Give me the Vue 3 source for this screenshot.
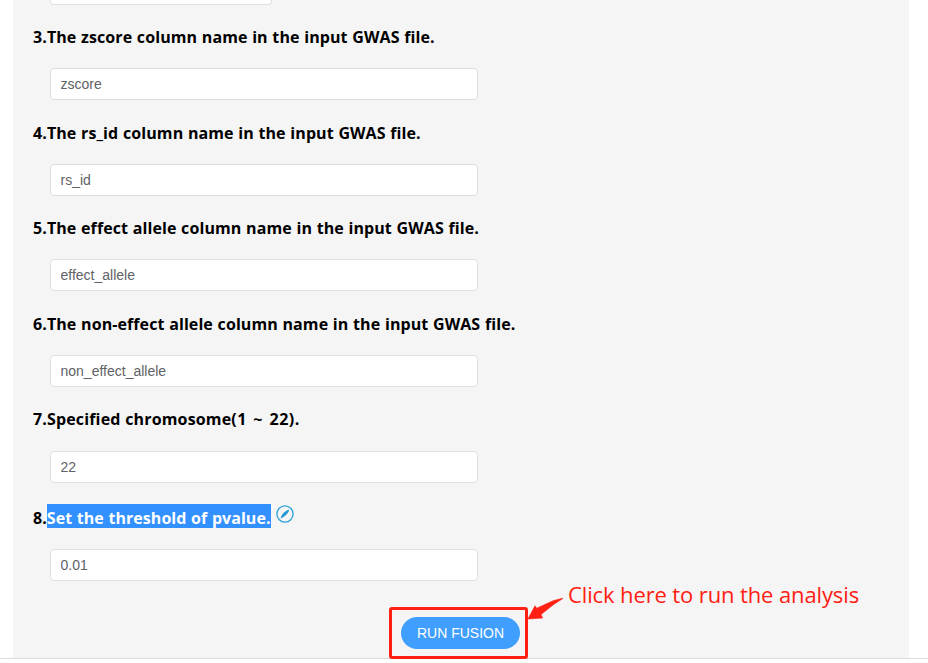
<script setup>
import { ref } from 'vue'

const fields = ref([
  { n: 3, label: 'The zscore column name in the input GWAS file.', value: 'zscore', size: 'short' },
  { n: 4, label: 'The rs_id column name in the input GWAS file.', value: 'rs_id' },
  { n: 5, label: 'The effect allele column name in the input GWAS file.', value: 'effect_allele', size: 'short' },
  { n: 6, label: 'The non-effect allele column name in the input GWAS file.', value: 'non_effect_allele' },
  { n: 7, label: 'Specified chromosome', range: '(1 ~ 22).', value: '22', size: 'even' },
  { n: 8, label: 'Set the threshold of pvalue.', value: '0.01', size: 'tall', selected: true },
])
</script>

<template>
  <div class="page">
    <main class="panel">
      <div class="previous"></div>
      <section v-for="f in fields" :key="f.n" class="field">
        <h4 class="title" :class="f.size">
          <span>{{ f.n }}.</span><span :class="{ selected: f.selected }">{{ f.label }}</span><span v-if="f.range" class="range">{{ f.range }}</span>
          <svg v-if="f.selected" class="compass" width="18" height="18" viewBox="0 0 18 18">
            <circle cx="9" cy="9" r="8.1" fill="none" stroke="#2a9fd8" stroke-width="1.3" />
            <path d="M13.200 4.400C11 5 9 6.400 7.500 7.900C6.100 9.300 5 11.200 4.500 13.400C6.700 12.700 8.500 11.500 9.900 10.100C11.500 8.500 12.700 6.700 13.200 4.400Z" fill="#2196d3" />
          </svg>
        </h4>
        <input v-model="f.value" class="input" type="text" />
      </section>
      <div class="actions">
        <div class="highlight"><button class="run">RUN FUSION</button></div>
        <svg class="arrow" width="38" height="28" viewBox="0 0 38 28">
          <path d="M35.500 2.200L26 4.800L9.700 12.200L8 9.800L0.900 23L15.700 22L14 18.500L27 8.200L35.500 2.800Z" fill="#ff2013" stroke="#ff2013" stroke-width="0.6" stroke-linejoin="round" />
        </svg>
        <span class="note">Click here to run the analysis</span>
      </div>
    </main>
  </div>
</template>

<style>
body {
  margin: 0;
  background: #fff;
  overflow: hidden;
}
</style>

<style scoped>
.page {
  height: 663px;
  box-sizing: border-box;
  padding: 0 19px 0 13px;
  overflow: hidden;
  background: linear-gradient(#dcdcdc, #dcdcdc) 0 658px / 100% 1px no-repeat #fff;
}
.panel {
  height: 658px;
  background: #f5f5f5;
}
.previous {
  box-sizing: border-box;
  width: 222px;
  height: 5px;
  margin-left: 37px;
  background: #fff;
  border: 1px solid #dcdfe6;
  border-top: 0;
  border-radius: 0 0 4px 4px;
}
.title {
  display: flex;
  align-items: center;
  box-sizing: border-box;
  height: 64px;
  margin: 0 0 0 20px;
  padding-top: 2px;
  font: 700 16px/24px 'Open Sans', 'Noto Sans', sans-serif;
  letter-spacing: 0.09px;
  word-spacing: 0.4px;
  color: #000;
  white-space: nowrap;
}
.title.short {
  height: 63px;
  padding-top: 0;
}
.title.even {
  padding-top: 0;
  letter-spacing: 0.15px;
}
.range {
  letter-spacing: 0.45px;
  word-spacing: 2px;
}
.title.tall {
  height: 66px;
  padding-top: 0;
  letter-spacing: 0.05px;
}
.selected {
  background: #3390ff;
  color: #fff;
}
.title.tall span {
  height: 20px;
  padding-top: 4px;
  line-height: 20px;
}
.compass {
  margin: 0 0 4px 5px;
}
.input {
  display: block;
  box-sizing: border-box;
  width: 428px;
  height: 32px;
  margin: 0 0 0 37px;
  padding: 0 9.5px;
  background: #fff;
  border: 1px solid #dcdfe6;
  border-radius: 4px;
  font: 14px 'Liberation Sans', Arial, sans-serif;
  color: #606266;
  outline: none;
}
.actions {
  display: flex;
  align-items: flex-start;
  padding: 11px 0 0 376px;
}
.highlight {
  box-sizing: border-box;
  width: 139px;
  height: 52px;
  margin-top: 15px;
  padding: 7px 9px;
  border: 3px solid #ff2013;
  border-radius: 3px;
}
.run {
  display: block;
  width: 119px;
  height: 32px;
  padding: 0;
  border: 0;
  border-radius: 16px;
  background: #409eff;
  color: #fff;
  font: 14px 'Liberation Sans', Arial, sans-serif;
}
.arrow {
  margin: 4px 0 0 -1px;
}
.note {
  margin: -14px 0 0 3px;
  font: 22px/32px 'Open Sans', 'Noto Sans', sans-serif;
  letter-spacing: -0.12px;
  color: #ff2013;
  white-space: nowrap;
}
</style>
